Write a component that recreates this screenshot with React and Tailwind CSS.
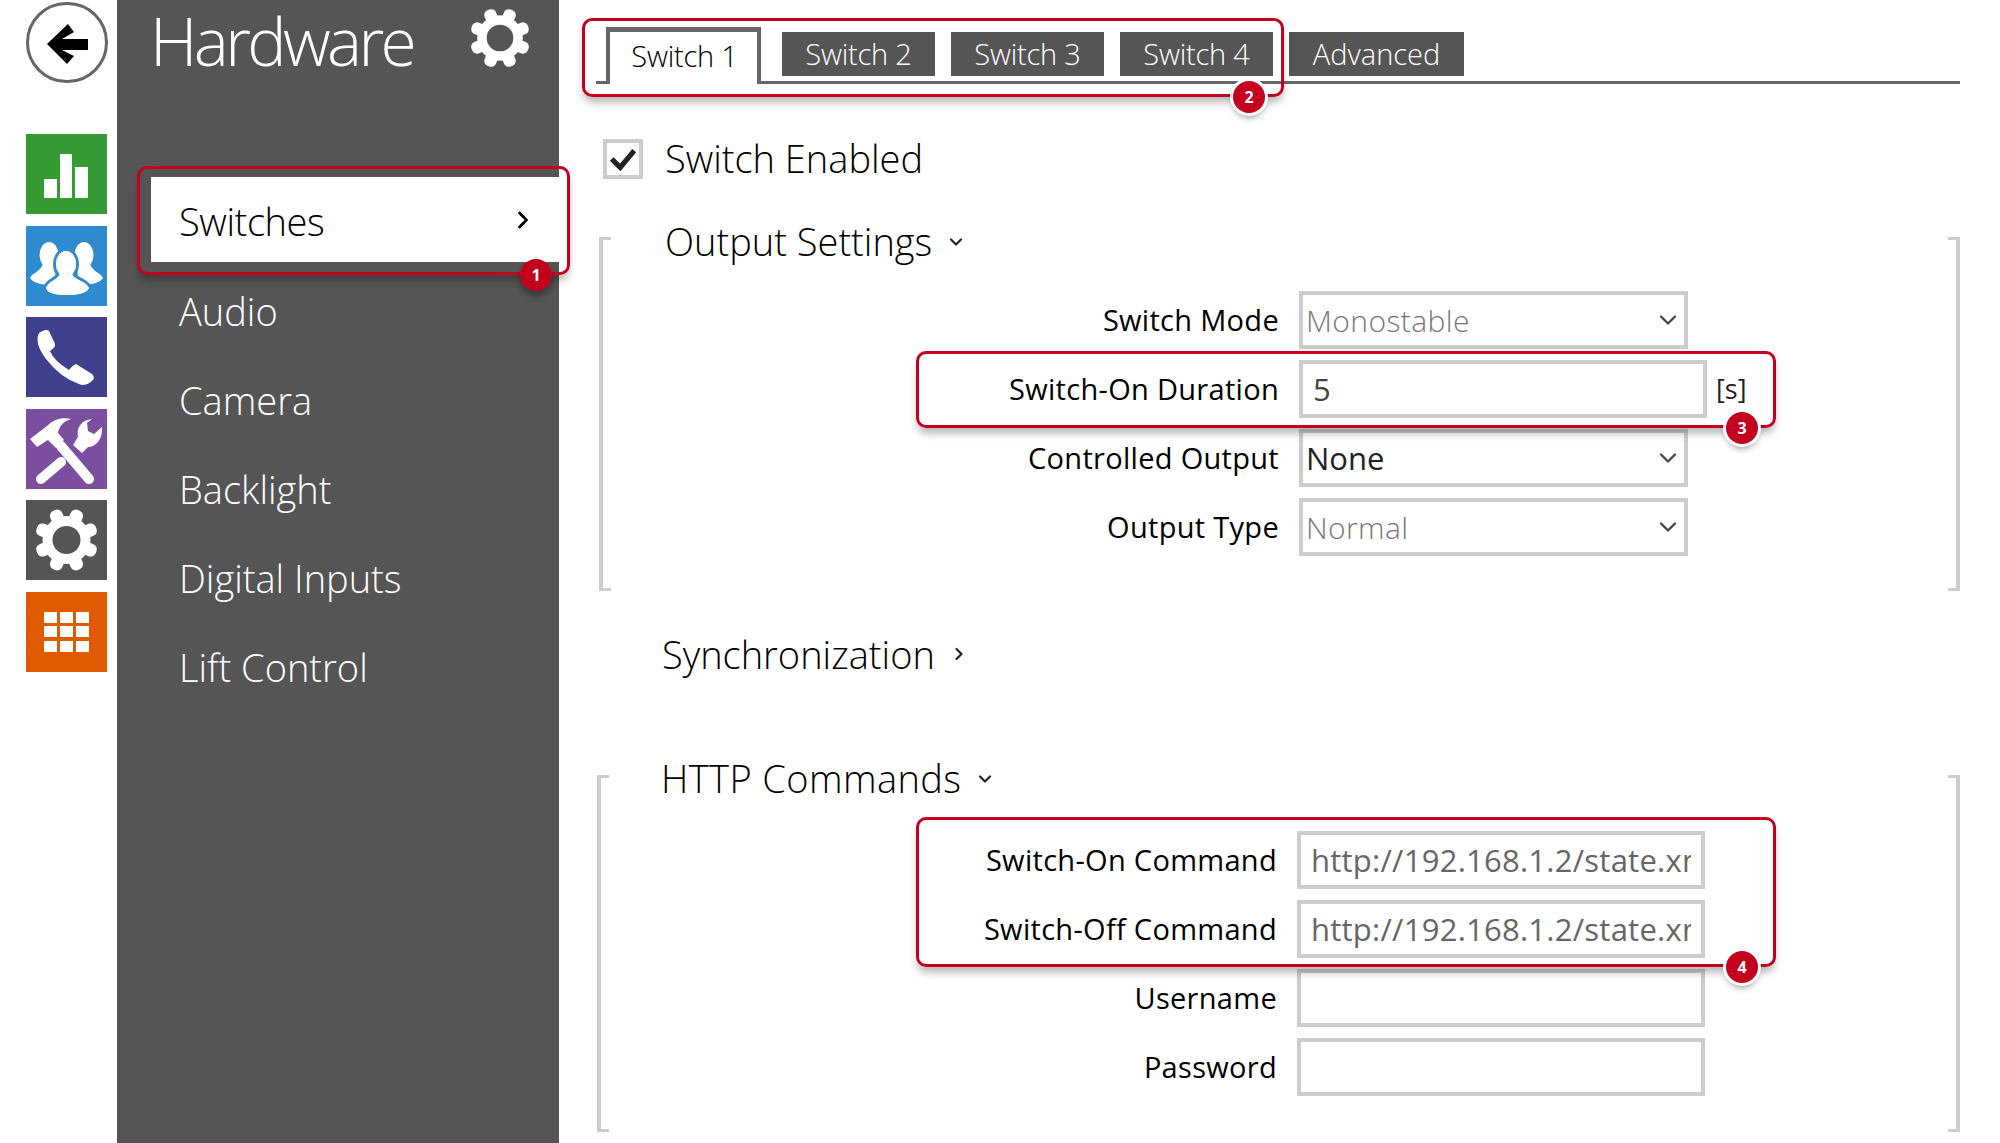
import { ChevronDown, ChevronRight } from "lucide-react";

const menuItems = ["Audio", "Camera", "Backlight", "Digital Inputs", "Lift Control"];

function Gear({ className, hole }) {
  const teeth = [22.5, 67.5, 112.5, 157.5, 202.5, 247.5, 292.5, 337.5];
  return (
    <svg viewBox="0 0 80 80" className={className}>
      <circle cx="40" cy="40" r="24" fill="#fff" />
      {teeth.map((deg) => (
        <rect key={deg} x="33.5" y="8" width="13" height="20" rx="5.5" fill="#fff" transform={`rotate(${deg} 40 40)`} />
      ))}
      <circle cx="40" cy="40" r="14" fill={hole} />
    </svg>
  );
}

function ChartIcon() {
  return (
    <svg viewBox="0 0 81 80" className="h-full w-full">
      <rect x="18" y="45" width="13" height="19" fill="#fff" />
      <rect x="34" y="20" width="12" height="44" fill="#fff" />
      <rect x="49" y="33" width="13" height="31" fill="#fff" />
    </svg>
  );
}

function PeopleIcon() {
  return (
    <svg viewBox="0 0 81 80" className="h-full w-full" fill="#fff">
      <ellipse cx="23" cy="29" rx="9.5" ry="13" />
      <path d="M17 38 L29 38 L30 58 C20 60 8 58 4 52 C6 47 14 46 17 38Z" />
      <ellipse cx="58" cy="29" rx="9.5" ry="13" />
      <path d="M52 38 L64 38 C67 46 75 47 77 52 C73 58 61 60 51 58Z" />
      <g stroke="#2e8bcf" strokeWidth="6" paintOrder="stroke">
        <ellipse cx="40" cy="38" rx="10" ry="13" />
        <path d="M34 48 L46 48 C48 54 60 55 63 62 C60 68 50 69 41 69 C31 69 22 68 20 62 C22 55 32 54 34 48Z" />
      </g>
      <ellipse cx="40" cy="38" rx="10" ry="13" />
      <path d="M34 48 L46 48 C48 54 60 55 63 62 C60 68 50 69 41 69 C31 69 22 68 20 62 C22 55 32 54 34 48Z" />
    </svg>
  );
}

function PhoneIcon() {
  return (
    <svg viewBox="0 0 81 80" className="h-full w-full" fill="#fff">
      <path d="M13 16 Q20 11 23 14 L29 27 Q30 30 24 34 Q28 44 43 53 Q47 48 50 47 L66 57 Q69 60 67 63 Q60 70 53 67 Q35 61 20 42 Q8 26 13 16Z" />
    </svg>
  );
}

function ToolsIcon() {
  return (
    <svg viewBox="0 0 81 80" className="h-full w-full" fill="#fff">
      <path d="M45 10 C36 8 28 10 21 17 L4 30 L11 38 L22 31 L30 39 L38 31 L32 24 C33 17 38 12 45 10Z" />
      <line x1="35" y1="37" x2="63" y2="70" stroke="#fff" strokeWidth="10" strokeLinecap="round" />
      <line x1="15" y1="70" x2="35" y2="53" stroke="#fff" strokeWidth="10" strokeLinecap="round" />
      <path d="M47 36 L56 44 L62 38 C70 38 77 30 76 18 L68 25 L62 22 L61 14 L66 10 C56 11 50 18 52 28Z" />
    </svg>
  );
}

function GridIcon() {
  return (
    <div className="grid h-full w-full grid-cols-3 grid-rows-3 gap-x-[3px] gap-y-[3.5px] px-[18px] py-[20px]">
      {Array.from({ length: 9 }).map((_, i) => (
        <div key={i} className="bg-white" />
      ))}
    </div>
  );
}

function Tile({ color, children }) {
  return <div className={`h-[80px] w-[81px] ${color}`}>{children}</div>;
}

function Rail() {
  return (
    <div className="flex w-[117px] shrink-0 flex-col pl-[26px] pt-[2px]">
      <div className="h-[81px] w-[82px] rounded-full border-[3px] border-[#666] bg-white">
        <svg viewBox="0 0 76 75" className="h-full w-full">
          <polygon points="18,39 39,19 45,27 33,34 59,34 59,45 33,45 45,51 38,59" fill="#000" />
        </svg>
      </div>
      <div className="mt-[51px] flex flex-col gap-[11.6px]">
        <Tile color="bg-[#379b35]"><ChartIcon /></Tile>
        <Tile color="bg-[#2e8bcf]"><PeopleIcon /></Tile>
        <Tile color="bg-[#3f418e]"><PhoneIcon /></Tile>
        <Tile color="bg-[#7b4ea0]"><ToolsIcon /></Tile>
        <Tile color="bg-[#555555]"><Gear className="h-full w-full" hole="#555555" /></Tile>
        <Tile color="bg-[#e05a00]"><GridIcon /></Tile>
      </div>
    </div>
  );
}

function SidePanel() {
  return (
    <div className="h-full w-[442px] shrink-0 bg-[#555555]">
      <div className="flex h-[177px] items-start justify-between pl-[33px] pr-[21px]">
        <h1 className="text-[66px] font-light leading-[80px] tracking-[-3.6px] text-white">Hardware</h1>
        <Gear className="h-[76px] w-[76px]" hole="#555555" />
      </div>
      <div className="ml-[34px] flex h-[85px] items-center justify-between bg-white pl-[28px] pr-[22px]">
        <span className="mt-[4px] text-[38px] font-light tracking-[-0.4px] text-black">Switches</span>
        <ChevronRight className="h-[28px] w-[28px] text-black" strokeWidth={2.4} />
      </div>
      <div className="mt-[5px] flex flex-col">
        {menuItems.map((item) => (
          <div key={item} className="flex h-[89px] items-center pl-[62px] text-[38px] font-light text-white">
            {item}
          </div>
        ))}
      </div>
    </div>
  );
}

function Tabs() {
  return (
    <div className="ml-[37px] mt-[27px] flex h-[57px] w-[1364px] items-start border-b-[3px] border-[#666]">
      <div className="z-10 ml-[10px] flex h-[57px] w-[155px] items-center justify-center border-x-[4px] border-t-[5px] border-[#666] bg-white pb-[5px] pl-[2px] text-[29px] font-light tracking-[-0.2px] text-black">
        Switch 1
      </div>
      {["Switch 2", "Switch 3", "Switch 4"].map((t, i) => (
        <div key={t} className={`mt-[5px] flex h-[44px] w-[153px] items-center justify-center bg-[#555] text-[29px] font-light tracking-[-0.2px] text-white ${i === 0 ? "ml-[21px]" : "ml-[16px]"}`}>
          {t}
        </div>
      ))}
      <div className="ml-[16px] mt-[5px] flex h-[44px] w-[175px] items-center justify-center bg-[#555] text-[29px] font-light text-white">
        Advanced
      </div>
    </div>
  );
}

function Brackets() {
  return (
    <>
      <div className="absolute bottom-0 left-0 top-0 w-[12px] border-y-[3px] border-l-[4px] border-[#ccc]" />
      <div className="absolute bottom-0 right-0 top-0 w-[12px] border-y-[3px] border-r-[4px] border-[#ccc]" />
    </>
  );
}

function Field({ label, children }) {
  return (
    <div className="mb-[11px] flex h-[58px] items-center">
      <div className="w-[680px] text-right text-[29px] tracking-[0.3px] text-black">{label}</div>
      <div className="ml-[20px]">{children}</div>
    </div>
  );
}

function SelectBox({ value, muted }) {
  return (
    <div className={`flex h-[58px] w-[389px] items-center justify-between border-[4px] border-[#ccc] pl-[3px] pr-[2px] ${muted ? "text-[30px] font-light tracking-[0.4px] text-[#777]" : "text-[31px] text-[#222]"}`}>
      <span>{value}</span>
      <ChevronDown className="h-[28px] w-[28px] text-[#444]" strokeWidth={2} />
    </div>
  );
}

function TextBox({ value, muted }) {
  return (
    <input
      readOnly
      value={value}
      className={`h-[58px] w-[408px] border-[4px] border-[#ccc] px-[10px] text-[31px] tracking-[0.25px] outline-none ${muted ? "text-[#666]" : "text-[#444]"}`}
    />
  );
}

function SectionTitle({ title, open, className }) {
  return (
    <div className={`flex h-[44px] items-center text-[38px] font-light text-black ${className}`}>
      <span>{title}</span>
      {open ? (
        <ChevronDown className="ml-[14px] mt-[2px] h-[20px] w-[20px] text-[#222]" strokeWidth={2.6} />
      ) : (
        <ChevronRight className="ml-[14px] h-[20px] w-[20px] text-[#222]" strokeWidth={2.6} />
      )}
    </div>
  );
}

function Annotation({ box, badgeClass, n, ring }) {
  return (
    <>
      <div className={`absolute rounded-[10px] border-[3px] border-[#c4001f] shadow-[0_7px_8px_-2px_rgba(0,0,0,0.3)] ${box}`} />
      <div className={`absolute flex h-[32px] w-[32px] items-center justify-center rounded-full bg-[#c4001f] text-[16px] font-bold text-white shadow-[0_5px_6px_rgba(0,0,0,0.35)] ${ring ? "ring-[3px] ring-white" : ""} ${badgeClass}`}>
        {n}
      </div>
    </>
  );
}

function MainPane() {
  return (
    <div className="h-full flex-1">
      <Tabs />
      <div className="ml-[44px] mt-[55px] flex h-[40px] items-center">
        <div className="flex h-[40px] w-[40px] items-center justify-center border-[4px] border-[#ccc]">
          <svg viewBox="0 0 32 32" className="h-[30px] w-[30px]">
            <path d="M4 16 L13 25 L28 7" fill="none" stroke="#222" strokeWidth="5.5" />
          </svg>
        </div>
        <span className="ml-[22px] mt-[-2px] text-[38px] font-light text-black">Switch Enabled</span>
      </div>

      <section className="relative ml-[40px] mr-[40px] mt-[58px] flex h-[354px] flex-col">
        <Brackets />
        <SectionTitle title="Output Settings" open className="ml-[66px] mt-[-18px]" />
        <div className="mt-[28px]">
          <Field label="Switch Mode"><SelectBox value="Monostable" muted /></Field>
          <Field label="Switch-On Duration">
            <div className="flex items-center">
              <TextBox value="5" />
              <span className="ml-[9px] text-[27px] text-[#222]">[s]</span>
            </div>
          </Field>
          <Field label="Controlled Output"><SelectBox value="None" /></Field>
          <Field label="Output Type"><SelectBox value="Normal" muted /></Field>
        </div>
      </section>

      <SectionTitle title="Synchronization" className="ml-[103px] mt-[41px]" />

      <section className="relative ml-[38px] mr-[40px] mt-[99px] flex h-[357px] flex-col">
        <Brackets />
        <SectionTitle title="HTTP Commands" open className="ml-[64px] mt-[-19px] tracking-[0.4px]" />
        <div className="mt-[31px]">
          <Field label="Switch-On Command"><TextBox value="http://192.168.1.2/state.xml" muted /></Field>
          <Field label="Switch-Off Command"><TextBox value="http://192.168.1.2/state.xml" muted /></Field>
          <Field label="Username"><TextBox value="" /></Field>
          <Field label="Password"><TextBox value="" /></Field>
        </div>
      </section>
    </div>
  );
}

export default function App() {
  return (
    <div className="relative flex h-[1143px] w-[2000px] overflow-hidden bg-white font-['Open_Sans',sans-serif]">
      <Rail />
      <SidePanel />
      <MainPane />

      {/* red callouts sit on top of the page */}
      <Annotation box="left-[137px] top-[166px] h-[109px] w-[433px]" badgeClass="left-[520px] top-[259px]" n="1" />
      <Annotation box="left-[582px] top-[18px] h-[79px] w-[702px]" badgeClass="left-[1233px] top-[81px]" n="2" ring />
      <Annotation box="left-[916px] top-[351px] h-[77px] w-[860px]" badgeClass="left-[1726px] top-[412px]" n="3" ring />
      <Annotation box="left-[916px] top-[817px] h-[150px] w-[860px]" badgeClass="left-[1726px] top-[951px]" n="4" ring />
    </div>
  );
}
